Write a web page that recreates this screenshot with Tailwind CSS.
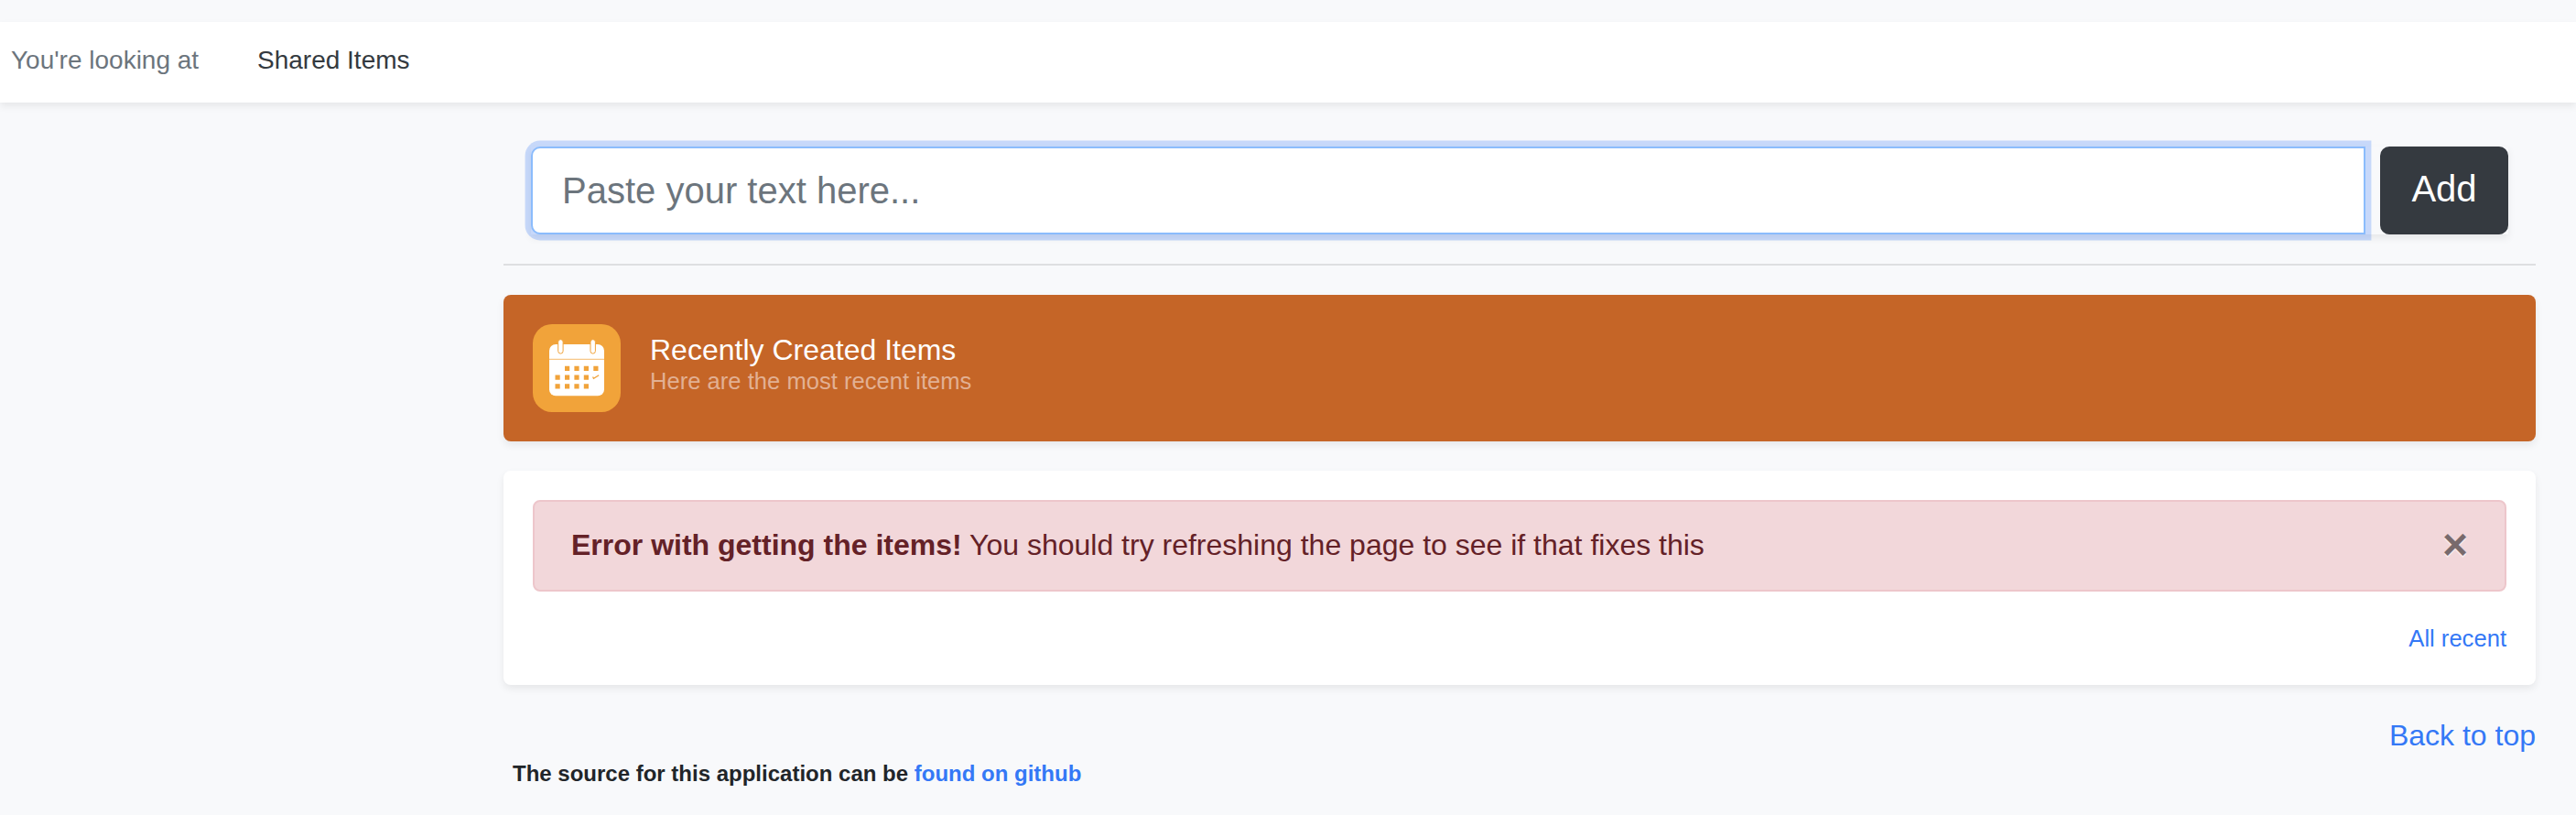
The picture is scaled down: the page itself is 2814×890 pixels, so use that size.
<!DOCTYPE html>
<html lang="en">
<head>
<meta charset="utf-8">
<title>Shared Items</title>
<script src="https://cdn.jsdelivr.net/npm/@tailwindcss/browser@4"></script>
</head>
<body class="h-[890px] overflow-hidden bg-[#f8f9fb] pt-6 font-['Liberation_Sans',Arial,sans-serif] text-[32px] leading-[48px] text-[#212529]">
  <nav class="flex h-[88px] items-center bg-white pb-1 pl-3 text-[28px] leading-[42px] shadow-[0_4px_8px_rgba(0,0,0,0.075)]">
    <a class="w-[269px] text-[#6c757d]">You're looking at</a>
    <a class="text-[#343a40]">Shared Items</a>
  </nav>

  <main class="ml-[550px] w-[2220px] pt-12">
    <form class="mx-[30px] flex h-24 gap-4 shadow-[0_4px_8px_rgba(0,0,0,0.075)]">
      <input type="text" placeholder="Paste your text here..." class="h-24 min-w-0 flex-1 rounded-l-[10px] border-2 border-[#8bbcfc] bg-white px-8 text-[40px] leading-[60px] shadow-[0_0_0_6.4px_rgba(52,120,246,0.25)] outline-none placeholder:text-[#6c757d]">
      <button type="button" class="h-24 w-[140px] rounded-[10px] bg-[#353a40] pb-1 text-[40px] leading-[60px] text-white">Add</button>
    </form>

    <hr class="mt-8 mb-8 border-0 border-t-2 border-[#dedfe1]">

    <header class="flex h-40 items-center rounded-lg bg-[#c56527] px-8 text-white shadow-[0_4px_8px_rgba(0,0,0,0.075)]">
      <svg class="mr-8 size-24" viewBox="0 0 96 96" fill="none">
        <rect width="96" height="96" rx="21" fill="#f1a33a"/>
        <rect x="18" y="22" width="60" height="56.3" rx="7" fill="#fff"/>
        <path d="M18 38.3H78" stroke="#f1a33a" stroke-opacity=".75"/>
        <g fill="#fff" stroke="#f1a33a" stroke-width="1">
          <rect x="27.7" y="16.7" width="5.4" height="15.4" rx="2.7"/>
          <rect x="63" y="16.7" width="5.4" height="15.4" rx="2.7"/>
        </g>
        <g stroke="#f1a33a" stroke-width="5.2">
          <path d="M35 48.3h5.2M45.4 48.3h5.2M55.8 48.3h5.2M66.3 48.3h5.2"/>
          <path d="M24.5 58.1h5.2M35 58.1h5.2M45.4 58.1h5.2M55.8 58.1h5.2"/>
          <path d="M24.5 67.9h5.2M35 67.9h5.2M45.4 67.9h5.2M55.8 67.9h5.2"/>
        </g>
        <path d="M65.6 57.4l.9 2 5.7-3.6" stroke="#f1a33a" stroke-width="1.3"/>
      </svg>
      <div class="pb-1">
        <h1 class="text-[32px] leading-[32px]">Recently Created Items</h1>
        <p class="text-[25.6px] leading-[36px] text-[#e2b093]">Here are the most recent items</p>
      </div>
    </header>

    <section class="mt-8 h-[234px] rounded-lg bg-white p-8 shadow-[0_4px_8px_rgba(0,0,0,0.075)]">
      <div class="flex h-[100px] items-center justify-between rounded-lg border-2 border-[#edc6cb] bg-[#f2d7da] pr-[40px] pb-[3px] pl-10 text-[#642127]">
        <p><strong>Error with getting the items!</strong> You should try refreshing the page to see if that fixes this</p>
        <button type="button" class="text-[48px] leading-[48px] font-bold text-black opacity-50 [text-shadow:0_2px_0_#fff]">×</button>
      </div>
      <p class="mt-[31px] text-right text-[25.6px] leading-[40px] text-[#3478f6]">All recent</p>
    </section>

    <footer class="pt-[31px]">
      <p class="text-right text-[#3478f6]">Back to top</p>
      <p class="pl-2.5 text-[24px] leading-[36px] font-bold">The source for this application can be <a class="text-[#3478f6]">found on github</a></p>
    </footer>
  </main>
</body>
</html>
